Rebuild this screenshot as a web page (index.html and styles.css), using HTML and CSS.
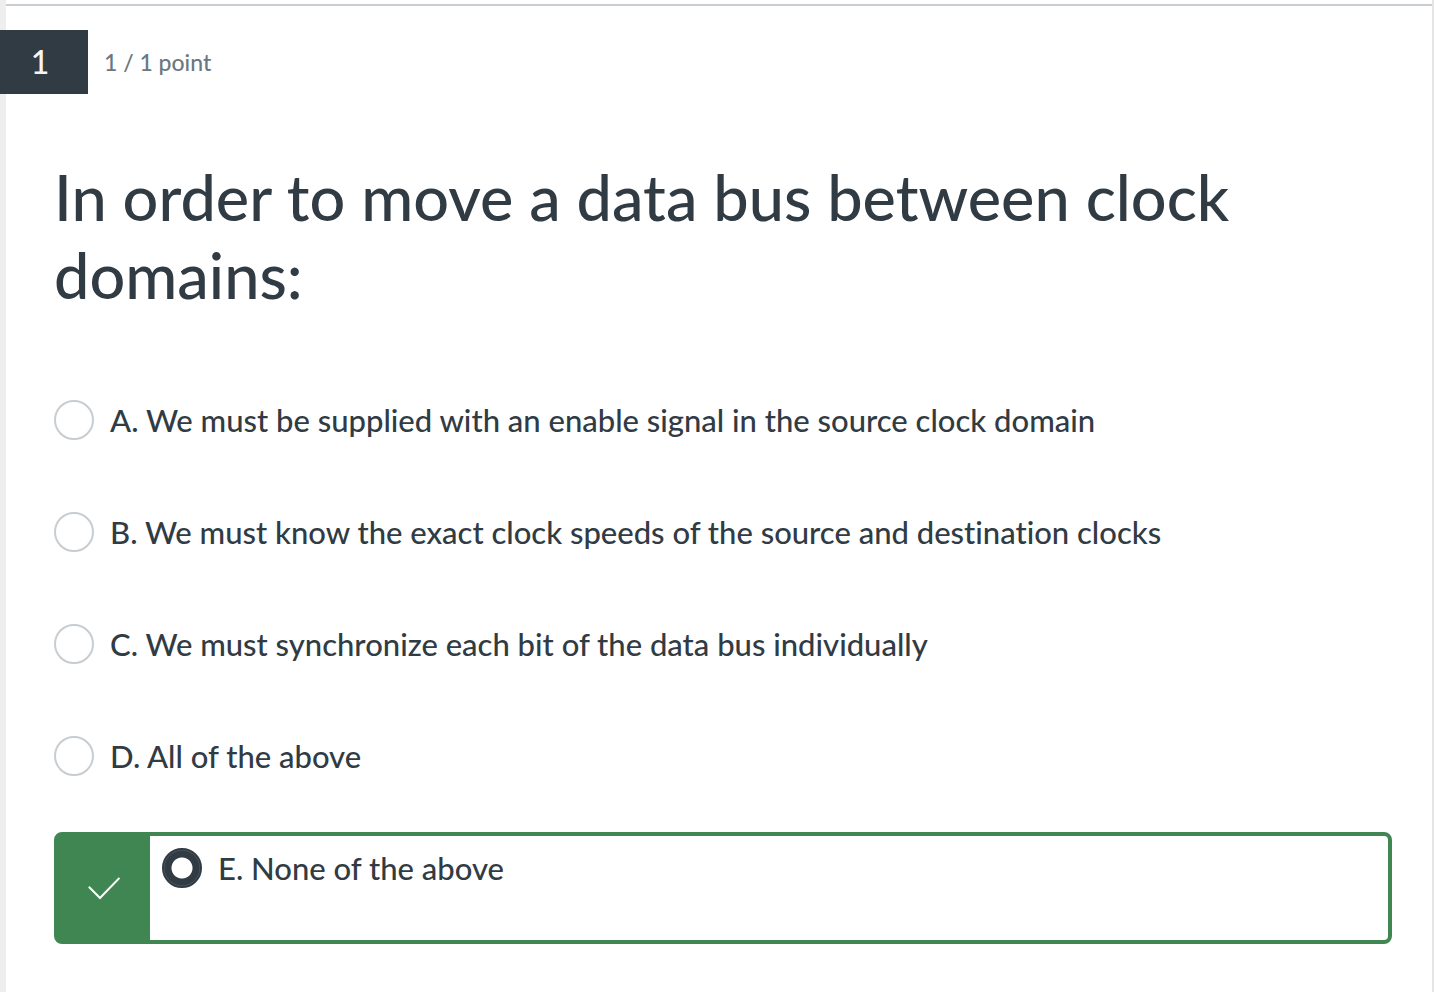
FILE: index.html
```html
<!DOCTYPE html>
<html lang="en">
<head>
<meta charset="utf-8">
<title>Quiz question</title>
<link rel="stylesheet" href="styles.css">
</head>
<body>
<main class="question">
  <header class="question-header">
    <span class="number">1</span>
    <span class="points">1 / 1 point</span>
  </header>
  <form class="content">
    <h1 class="prompt" id="prompt">In order to move a data bus between clock domains:</h1>
    <div class="options" role="radiogroup" aria-labelledby="prompt">
      <label class="option"><input class="radio" type="radio" name="answer"><span>A. We must be supplied with an enable signal in the source clock domain</span></label>
      <label class="option"><input class="radio" type="radio" name="answer"><span>B. We must know the exact clock speeds of the source and destination clocks</span></label>
      <label class="option"><input class="radio" type="radio" name="answer"><span>C. We must synchronize each bit of the data bus individually</span></label>
      <label class="option"><input class="radio" type="radio" name="answer"><span>D. All of the above</span></label>
      <div class="correct">
        <div class="mark">
          <svg class="check" viewBox="0 0 32 24" aria-label="Correct" role="img"><path d="M.8 10.8 12 22 31.4 2" fill="none" stroke="#fff" stroke-width="2"/></svg>
        </div>
        <label class="option chosen"><input class="radio" type="radio" name="answer" checked><span>E. None of the above</span></label>
      </div>
    </div>
  </form>
</main>
</body>
</html>
```

FILE: styles.css
```css
* { box-sizing: border-box; }

body {
  margin: 0;
  padding: 4px 0 0 6px;
  border-right: 2px solid #e5e5e5;
  background: linear-gradient(to right, #eeeeee 6px, #ffffff 6px);
  color: #313b44;
  font-family: Lato, "Liberation Sans", sans-serif;
  font-variant-ligatures: none;
}

.question {
  min-height: calc(100vh - 4px);
  border-top: 2px solid #c7cdd1;
  padding: 24px 0 48px;
}

.question-header {
  display: flex;
  align-items: center;
  gap: 16px;
  margin-left: -6px;
}

.number {
  width: 88px;
  height: 64px;
  padding-right: 8px;
  background: #313b44;
  color: #f5f5f5;
  font-size: 32px;
  font-weight: 500;
  line-height: 64px;
  text-align: center;
}

.points {
  color: #6b7780;
  font-size: 23px;
  font-weight: 500;
  line-height: 32px;
}

.content {
  padding: 64px 40px 0 48px;
}

.prompt {
  margin: 0;
  font-size: 63px;
  font-weight: 500;
  line-height: 78px;
}

.options {
  margin-top: 50px;
}

.option {
  display: flex;
  align-items: flex-start;
  gap: 16px;
  padding: 36px 0;
  font-size: 31px;
  font-weight: 500;
  line-height: 40px;
}

.radio {
  appearance: none;
  flex: none;
  width: 40px;
  height: 40px;
  margin: 0;
  border: 2px solid #c7cdd1;
  border-radius: 50%;
  background: #ffffff;
}

.radio:checked {
  border-color: #313b44;
  background: radial-gradient(circle, #ffffff 10px, #313b44 11px, #313b44 17px, #56606a 18px);
}

.correct {
  display: flex;
  min-height: 112px;
  margin-top: 20px;
  border: 4px solid #3f8652;
  border-radius: 8px;
}

.mark {
  display: flex;
  align-items: center;
  justify-content: center;
  width: 92px;
  background: #3f8652;
}

.check {
  width: 32px;
  height: 24px;
}

.chosen {
  flex: 1;
  padding: 12px;
}
```
